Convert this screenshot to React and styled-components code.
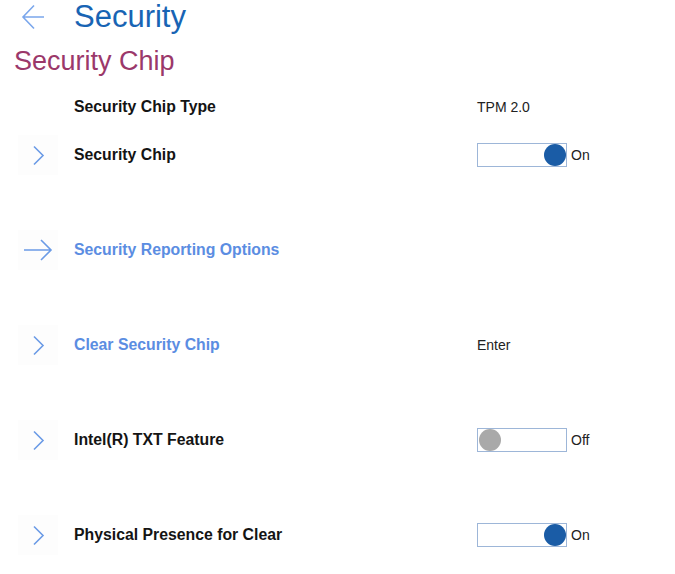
import React from 'react';
import styled, { createGlobalStyle } from 'styled-components';

const GlobalStyle = createGlobalStyle`
    body{
        margin: 0;
        background: #fff;
        font-family: "Liberation Sans", Arial, sans-serif;
    }
`

const Page = styled.div`
    width: 675px;
    height: 574px;
    overflow: hidden;
    background: #fff;
`

const TitleBar = styled.div`
    display: flex;
    align-items: center;
    height: 34px;

    h1{
        margin: 0;
        font-size: 31px;
        font-weight: 400;
        color: #1864b4;
        line-height: 32px;
    }
`

const BackButton = styled.div`
    width: 74px;
    height: 32px;
    padding-left: 21px;
    box-sizing: border-box;
    display: flex;
    align-items: center;
`

const SubTitle = styled.h2`
    margin: 12px 0 0 14px;
    font-size: 27px;
    font-weight: 400;
    line-height: 30px;
    color: #9b386a;
`

const List = styled.div`
    margin-top: 7px;
    display: flex;
    flex-direction: column;
`

const Row = styled.div`
    display: grid;
    grid-template-columns: 74px 403px 1fr;
    align-items: center;
    height: 48px;
    margin-top: ${p => (p.$spaced ? '47px' : '0')};
`

const IconCell = styled.div`
    display: flex;
    align-items: center;
    justify-content: center;
    width: 40px;
    height: 40px;
    margin-left: 18px;
    background: ${p => (p.$empty ? 'transparent' : '#fdfdfd')};
`

const Label = styled.div`
    font-size: 15.8px;
    font-weight: 700;
    color: ${p => (p.$link ? '#5b8de2' : '#141414')};
`

const Value = styled.div`
    font-size: 14px;
    color: #222;
    display: flex;
    align-items: center;
`

const ToggleBox = styled.div`
    width: 90px;
    height: 24px;
    box-sizing: border-box;
    border: 1.5px solid #9db6d8;
    display: flex;
    align-items: center;
    justify-content: ${p => (p.$on ? 'flex-end' : 'flex-start')};
    padding: 0 0.5px;
`

const Knob = styled.div`
    width: 22px;
    height: 22px;
    border-radius: 50%;
    background: ${p => (p.$on ? '#1a5ca6' : '#a9a9a9')};
`

const ToggleText = styled.span`
    margin-left: 4px;
    font-size: 14px;
    color: #222;
`

const Chevron = () => (
    <svg width="13" height="21" viewBox="0 0 13 21">
        <path d="M2 1.5 L11 10.5 L2 19.5" fill="none" stroke="#6b9be6" strokeWidth="1.6" />
    </svg>
)

const ArrowRight = () => (
    <svg width="30" height="24" viewBox="0 0 30 24">
        <path d="M1 12H28 M18 2 L28 12 L18 22" fill="none" stroke="#6b9be6" strokeWidth="1.6" />
    </svg>
)

const ArrowLeft = () => (
    <svg width="24" height="30" viewBox="0 0 24 30">
        <path d="M23 15H2 M13 3.5 L2 15 L13 26.5" fill="none" stroke="#7ba7ec" strokeWidth="1.6" />
    </svg>
)

const Toggle = ({ on }) => (
    <Value>
        <ToggleBox $on={on}>
            <Knob $on={on} />
        </ToggleBox>
        <ToggleText>{on ? 'On' : 'Off'}</ToggleText>
    </Value>
)

const App = () => {
    return <Page>
        <GlobalStyle />
        <TitleBar>
            <BackButton><ArrowLeft /></BackButton>
            <h1>Security</h1>
        </TitleBar>
        <SubTitle>Security Chip</SubTitle>

        <List>
            <Row>
                <IconCell $empty />
                <Label>Security Chip Type</Label>
                <Value>TPM 2.0</Value>
            </Row>
            <Row>
                <IconCell><Chevron /></IconCell>
                <Label>Security Chip</Label>
                <Toggle on />
            </Row>
            <Row $spaced>
                <IconCell><ArrowRight /></IconCell>
                <Label $link>Security Reporting Options</Label>
                <div />
            </Row>
            <Row $spaced>
                <IconCell><Chevron /></IconCell>
                <Label $link>Clear Security Chip</Label>
                <Value>Enter</Value>
            </Row>
            <Row $spaced>
                <IconCell><Chevron /></IconCell>
                <Label>Intel(R) TXT Feature</Label>
                <Toggle on={false} />
            </Row>
            <Row $spaced>
                <IconCell><Chevron /></IconCell>
                <Label>Physical Presence for Clear</Label>
                <Toggle on />
            </Row>
        </List>
    </Page>;
};

export default App;
